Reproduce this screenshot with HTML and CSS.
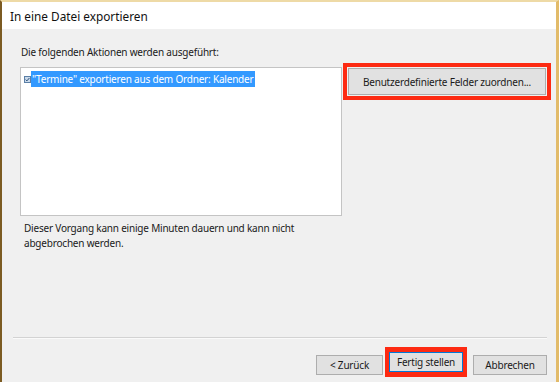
FILE: index.html
```html
<!DOCTYPE html>
<html lang="de">
<head>
  <meta charset="UTF-8">
  <title>In eine Datei exportieren</title>
  <link rel="stylesheet" href="styles.css">
</head>
<body>
  <div class="window">
    <!-- Title bar -->
    <div class="titlebar">In eine Datei exportieren</div>

    <div class="content">
      <p class="prompt">Die folgenden Aktionen werden ausgeführt:</p>

      <div class="actions">
        <div class="action-list">
          <div class="action-item">
            <svg class="item-check" width="7" height="7" viewBox="0 0 7 7" xmlns="http://www.w3.org/2000/svg">
              <rect x="0.5" y="0.5" width="6" height="6" fill="#c9d9ea" stroke="#5b7fa6"/>
              <path d="M1.6 3.6 L2.9 4.9 L5.4 2" fill="none" stroke="#2a4f7c" stroke-width="1"/>
            </svg>
            <span class="item-label">"Termine" exportieren aus dem Ordner: Kalender</span>
          </div>
        </div>

        <span class="highlight">
          <button class="btn btn-wide">Benutzerdefinierte Felder zuordnen...</button>
        </span>
      </div>

      <p class="note">Dieser Vorgang kann einige Minuten dauern und kann nicht<br>abgebrochen werden.</p>
    </div>

    <!-- Footer -->
    <div class="footer">
      <div class="separator"></div>
      <div class="footer-buttons">
        <button class="btn">&lt; Zurück</button>
        <span class="highlight highlight-small">
          <button class="btn btn-default">Fertig stellen</button>
        </span>
        <button class="btn">Abbrechen</button>
      </div>
    </div>
  </div>
</body>
</html>
```

FILE: styles.css
```css
body {
  margin: 0;
  font-family: "Noto Sans", "Open Sans", sans-serif;
  font-size: 10px;
  letter-spacing: -0.2px;
  color: #1a1a1a;
}

.window {
  width: 559px;
  height: 382px;
  box-sizing: border-box;
  border-top: 2px solid #eedaa6;
  border-left: 2px solid #7c5b22;
  border-right: 3px solid #e2bb6a;
  background-color: #f0f0f0;
  display: flex;
  flex-direction: column;
  overflow: hidden;
}

/* Title bar */
.titlebar {
  height: 27px;
  flex-shrink: 0;
  background-color: #fff;
  padding-left: 8px;
  display: flex;
  align-items: center;
  font-size: 11.8px;
  letter-spacing: 0;
  color: #111;
}

.content {
  flex: 1;
  padding: 0 0 0 18px;
}

.prompt {
  margin: 16px 0 7px 1px;
  line-height: 15px;
}

.actions {
  display: flex;
  align-items: flex-start;
}

.action-list {
  width: 322px;
  height: 149px;
  box-sizing: border-box;
  background-color: #fff;
  border: 1px solid #c4c4c4;
  padding: 3px 0 0 3px;
}

.action-item {
  display: flex;
  align-items: center;
}

.item-check {
  flex-shrink: 0;
}

.item-label {
  background-color: #3399ff;
  color: #fff;
  line-height: 16px;
  padding: 0 2px 0 1px;
  white-space: nowrap;
}

/* Red markers */
.highlight {
  display: inline-flex;
  border: 4px solid #fd2a12;
  margin: -4px 0 0 1px;
}

.highlight-small {
  margin: -5px 6px 0 2px;
  border-width: 5px 4px;
}

.btn {
  font-family: inherit;
  font-size: 10px;
  letter-spacing: -0.2px;
  color: #1a1a1a;
  background-color: #e1e1e1;
  border: 1px solid #adadad;
  height: 20px;
  padding: 0;
  margin: 0;
  white-space: nowrap;
  cursor: pointer;
}

.btn-wide {
  width: 198px;
  height: 27px;
  margin: 1px;
}

.btn-default {
  width: 74px;
  border-color: #0078d7;
}

.footer-buttons .btn {
  width: 67px;
}

.footer-buttons .btn-default,
.footer-buttons .btn:last-child {
  width: 74px;
}

.note {
  margin: 5px 0 0 4px;
  line-height: 15px;
}

/* Footer */
.footer {
  flex-shrink: 0;
  padding: 0 9px 5px 11px;
}

.separator {
  height: 1px;
  background-color: #d3d3d3;
  border-bottom: 1px solid #fafafa;
  margin-bottom: 13px;
}

.footer-buttons {
  display: flex;
  justify-content: flex-end;
  align-items: center;
}
```
